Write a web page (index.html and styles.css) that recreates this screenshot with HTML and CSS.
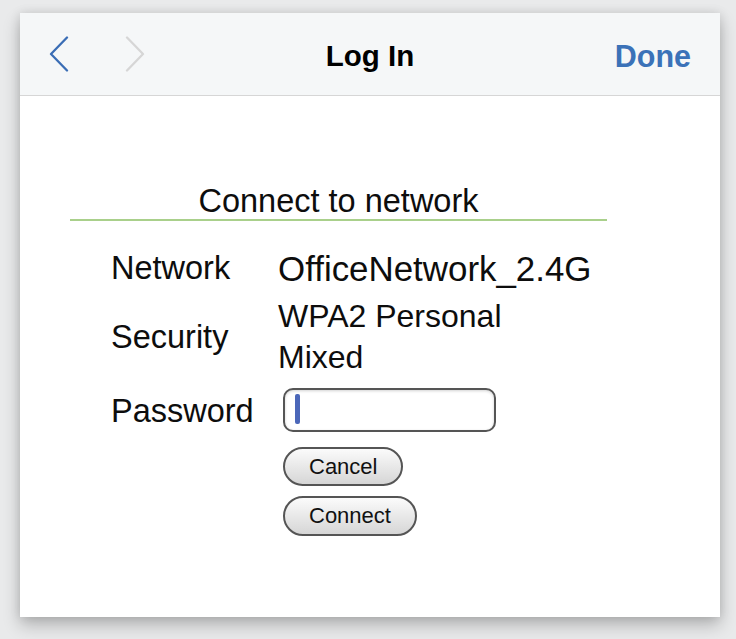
FILE: index.html
```html
<!DOCTYPE html>
<html lang="en">
<head>
<meta charset="utf-8">
<title>Log In</title>
<link rel="stylesheet" href="styles.css">
</head>
<body>
<div class="window">
  <header class="topbar">
    <div class="nav">
      <svg class="chev" width="20" height="36" viewBox="0 0 20 36"><path d="M18 1.5 L2 18 L18 34.5" fill="none" stroke="#3a6db5" stroke-width="2.3" stroke-linecap="round" stroke-linejoin="round"/></svg>
      <svg class="chev" width="20" height="36" viewBox="0 0 20 36"><path d="M2 1.5 L18 18 L2 34.5" fill="none" stroke="#d6d6d6" stroke-width="2.3" stroke-linecap="round" stroke-linejoin="round"/></svg>
    </div>
    <div class="title">Log In</div>
    <div class="done">Done</div>
  </header>
  <main class="content">
    <h1 class="heading">Connect to network</h1>
    <div class="row row-network">
      <div class="label">Network</div>
      <div class="value value-big">OfficeNetwork_2.4G</div>
    </div>
    <div class="row row-security">
      <div class="label">Security</div>
      <div class="value">WPA2 Personal<br>Mixed</div>
    </div>
    <div class="row row-password">
      <div class="label label-pw">Password</div>
      <div class="field"><span class="caret"></span></div>
    </div>
    <div class="buttons">
      <button class="btn btn-cancel">Cancel</button>
      <button class="btn btn-connect">Connect</button>
    </div>
  </main>
</div>
</body>
</html>
```

FILE: styles.css
```css
html, body {
  margin: 0;
  padding: 0;
}
body {
  background: #e9eaeb;
  font-family: "Liberation Sans", Arial, sans-serif;
  color: #0d0d0d;
  width: 736px;
  height: 639px;
  overflow: hidden;
}
.window {
  margin: 13px 0 0 20px;
  width: 700px;
  height: 604px;
  background: #fff;
  box-shadow: 0 8px 16px rgba(0, 0, 0, 0.24), 0 0 10px rgba(0, 0, 0, 0.10);
  display: flex;
  flex-direction: column;
}
.topbar {
  height: 82px;
  background: #f5f7f8;
  border-bottom: 1px solid #d6d6d6;
  display: grid;
  grid-template-columns: 1fr auto 1fr;
  align-items: center;
}
.nav {
  display: flex;
  align-items: center;
  gap: 56px;
  padding-left: 29px;
}
.chev {
  display: block;
}
.title {
  font-size: 29.5px;
  font-weight: bold;
  color: #000;
  padding-top: 4px;
}
.done {
  justify-self: end;
  padding-right: 29px;
  font-size: 30.5px;
  font-weight: bold;
  color: #3b72b8;
  padding-top: 4px;
}
.content {
  display: flex;
  flex-direction: column;
}
.heading {
  margin: 87px 0 0 50px;
  width: 537px;
  font-size: 32.5px;
  font-weight: normal;
  line-height: 36px;
  text-align: center;
  border-bottom: 2px solid #a9d08b;
}
.row {
  display: flex;
  align-items: center;
  padding-left: 91px;
}
.row-network {
  margin-top: 27px;
}
.row-security {
  margin-top: 7px;
}
.row-password {
  margin-top: 10px;
}
.label {
  width: 167px;
  font-size: 32.5px;
  line-height: 41px;
}
.label-pw {
  padding-top: 3px;
}
.value {
  font-size: 32px;
  line-height: 41px;
}
.value-big {
  font-size: 34.9px;
}
.field {
  margin-left: 5px;
  width: 209px;
  height: 40px;
  border: 2px solid #555;
  border-radius: 10px;
  box-shadow: inset 0 1px 3px rgba(0, 0, 0, 0.18);
  display: flex;
  align-items: center;
  background: #fff;
}
.caret {
  display: block;
  margin-left: 10px;
  margin-top: -3px;
  width: 5px;
  height: 30px;
  border-radius: 2px;
  background: #4b67b9;
}
.buttons {
  margin: 15px 0 0 263px;
  display: flex;
  flex-direction: column;
  align-items: flex-start;
  gap: 10px;
}
.btn {
  font-family: "Liberation Sans", Arial, sans-serif;
  font-size: 22px;
  color: #111;
  height: 40px;
  padding: 0 24px;
  border: 2px solid #555;
  border-radius: 20px;
  background: linear-gradient(#fbfbfb, #d6d6d6);
  line-height: 36px;
}
.btn-cancel {
  height: 39px;
}
```
